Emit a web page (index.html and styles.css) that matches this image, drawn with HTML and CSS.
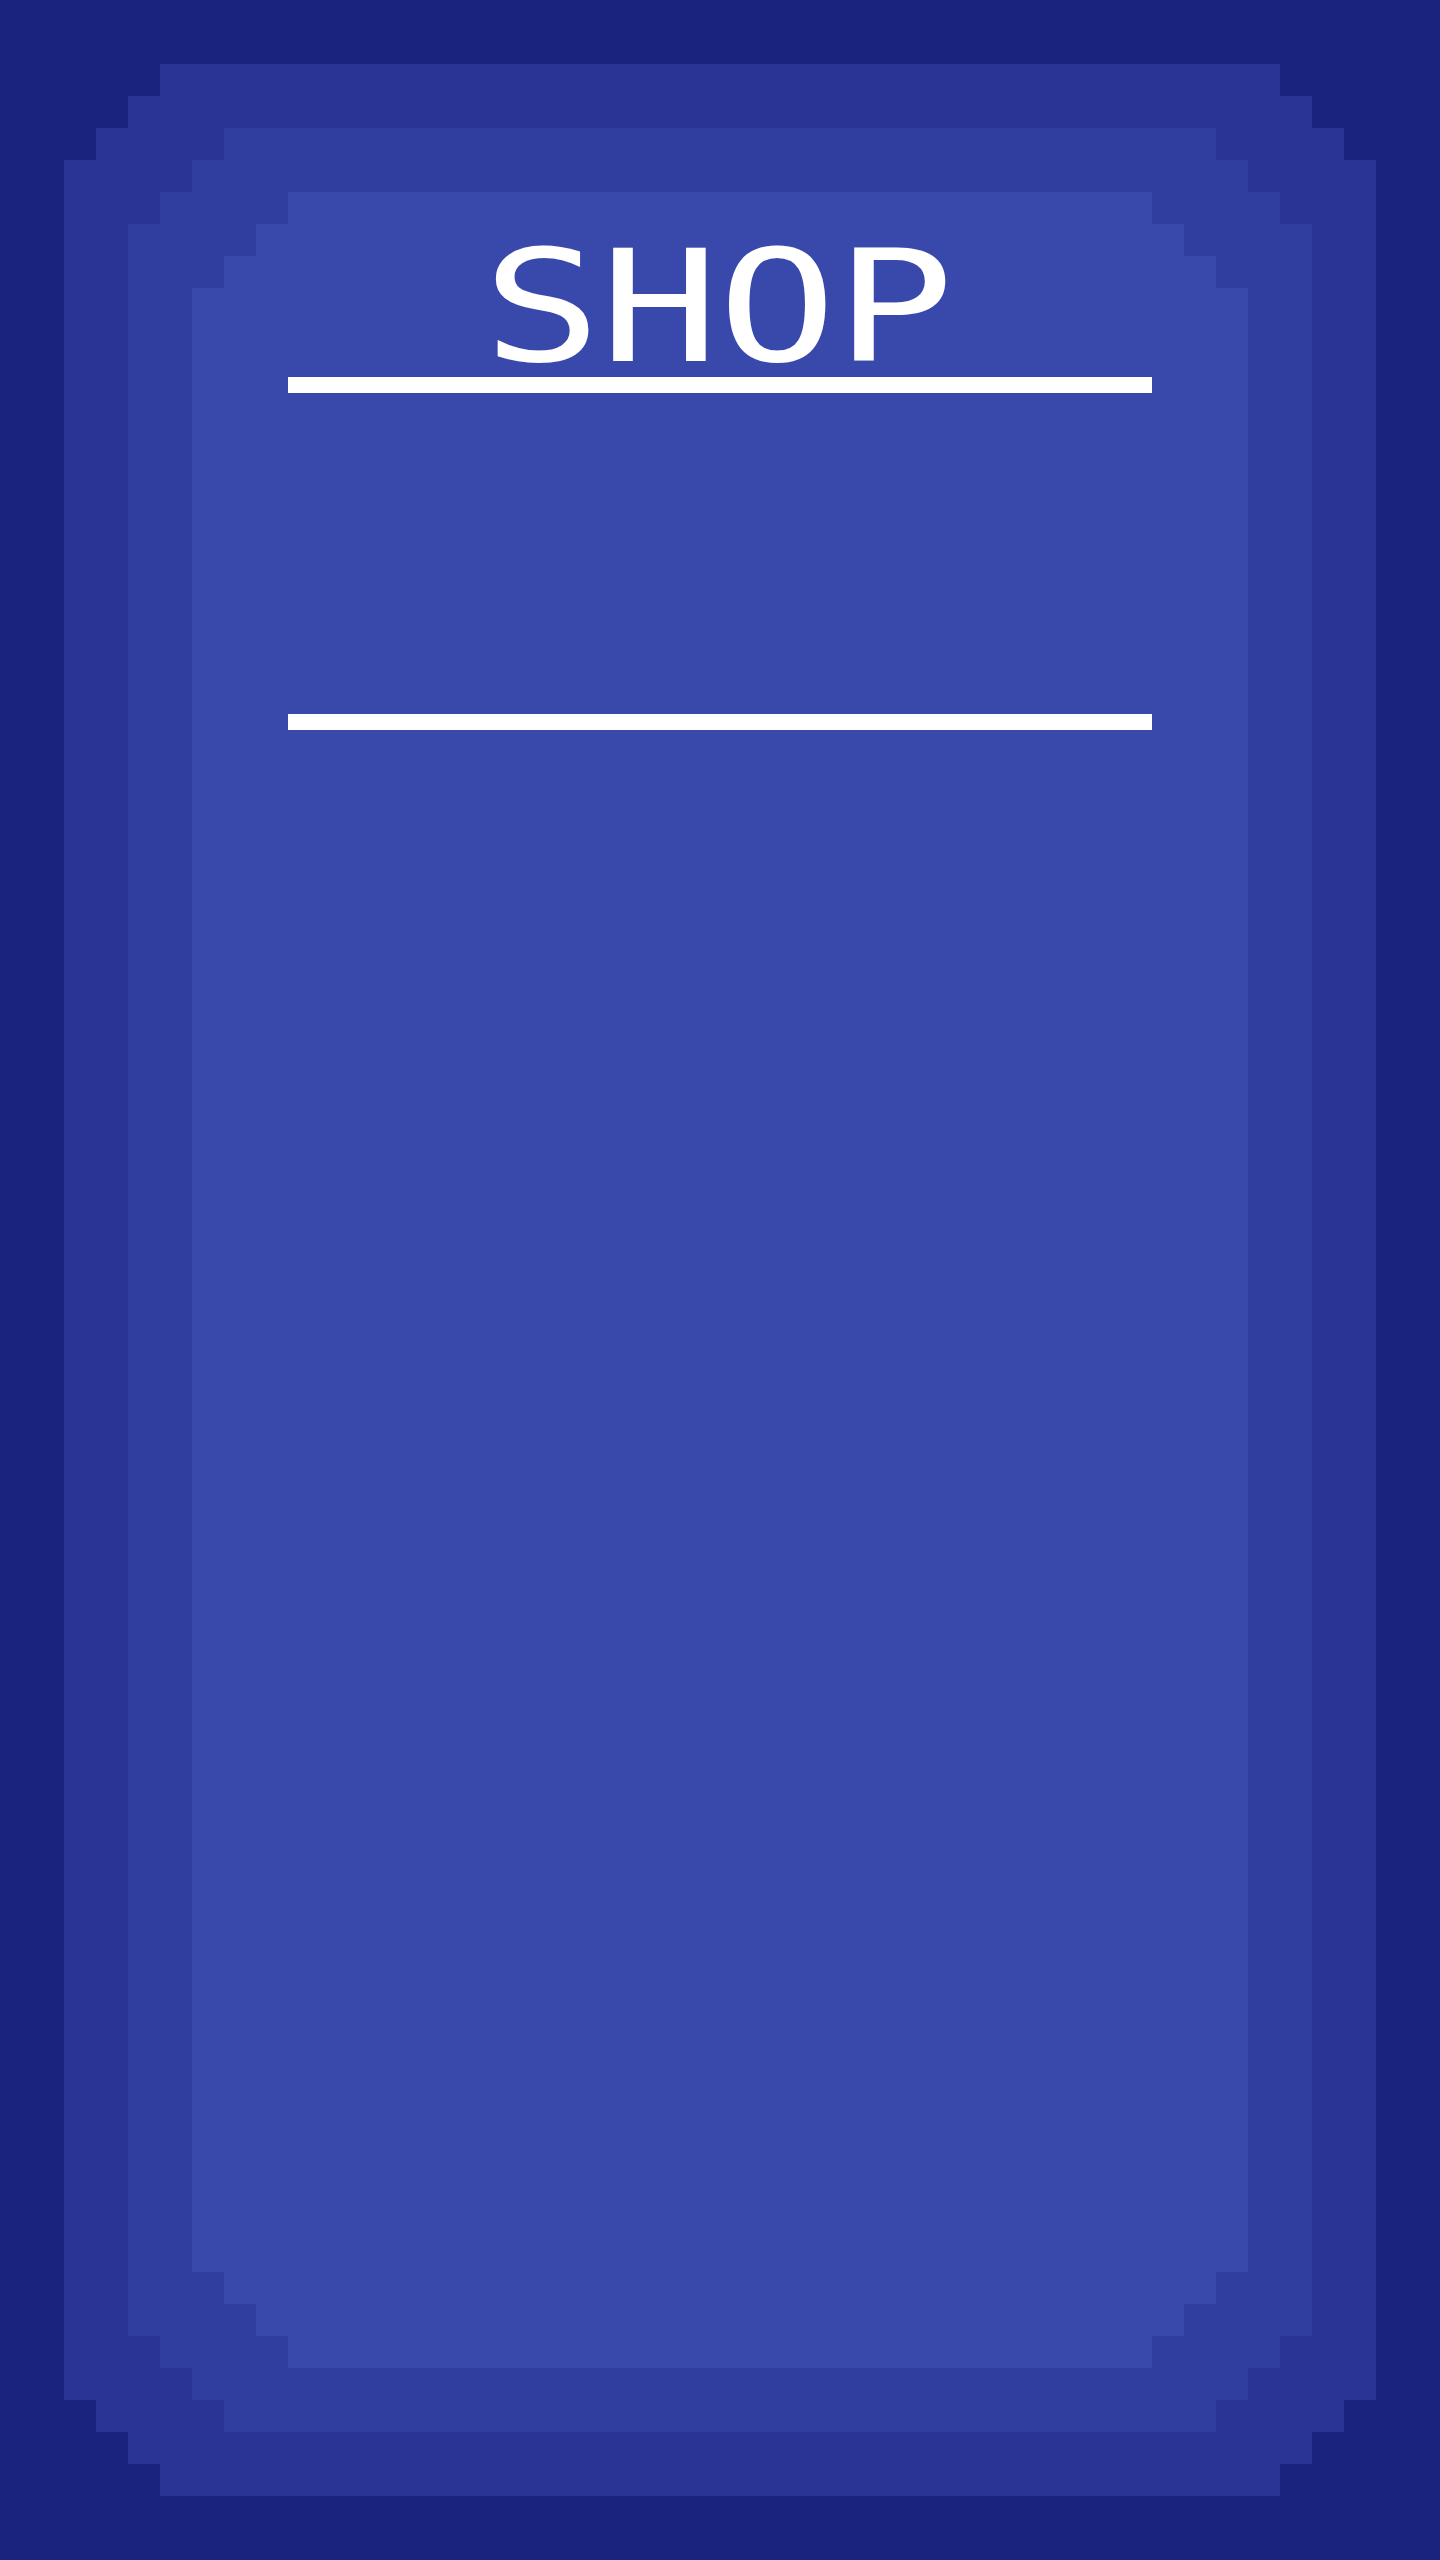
FILE: index.html
```html
<!DOCTYPE html>
<html lang="en">
<head>
<meta charset="utf-8">
<title>Shop</title>
<link rel="stylesheet" href="styles.css">
</head>
<body>
<main class="frame frame-outer stepped">
  <div class="frame frame-mid stepped">
    <section class="panel stepped">
      <h1 class="title"><span class="title-text">SHOP</span></h1>
      <div class="rule"></div>
      <div class="shop-items"></div>
      <div class="rule"></div>
    </section>
  </div>
</main>
</body>
</html>
```
FILE: styles.css
```css
html, body {
  margin: 0;
  padding: 0;
}

body {
  background: #1a237e;
  width: 1440px;
  height: 2560px;
  padding: 64px;
  box-sizing: border-box;
  font-family: "DejaVu Sans Mono", "Liberation Mono", monospace;
}

.stepped {
  clip-path: polygon(
    96px 0, calc(100% - 96px) 0,
    calc(100% - 96px) 32px, calc(100% - 64px) 32px,
    calc(100% - 64px) 64px, calc(100% - 32px) 64px,
    calc(100% - 32px) 96px, 100% 96px,
    100% calc(100% - 96px), calc(100% - 32px) calc(100% - 96px),
    calc(100% - 32px) calc(100% - 64px), calc(100% - 64px) calc(100% - 64px),
    calc(100% - 64px) calc(100% - 32px), calc(100% - 96px) calc(100% - 32px),
    calc(100% - 96px) 100%, 96px 100%,
    96px calc(100% - 32px), 64px calc(100% - 32px),
    64px calc(100% - 64px), 32px calc(100% - 64px),
    32px calc(100% - 96px), 0 calc(100% - 96px),
    0 96px, 32px 96px,
    32px 64px, 64px 64px,
    64px 32px, 96px 32px
  );
}

.frame {
  display: flex;
  flex-direction: column;
  padding: 64px;
  box-sizing: border-box;
}

.frame-outer {
  background: #283593;
  height: 100%;
}

.frame-mid {
  background: #303f9f;
  flex: 1;
}

.panel {
  flex: 1;
  background: #3949ab;
  display: flex;
  flex-direction: column;
  padding: 0 96px;
}

.title {
  margin: 0;
  height: 185px;
  padding: 38px 4px 0 0;
  box-sizing: border-box;
  line-height: 155px;
  font-size: 155px;
  font-weight: normal;
  color: #ffffff;
  text-align: center;
  white-space: nowrap;
}

.title-text {
  display: inline-block;
  letter-spacing: -1px;
  transform: scaleX(1.273);
  transform-origin: center;
}

.rule {
  height: 16px;
  background: #ffffff;
  flex: none;
}

.shop-items {
  height: 321px;
  flex: none;
}
```
